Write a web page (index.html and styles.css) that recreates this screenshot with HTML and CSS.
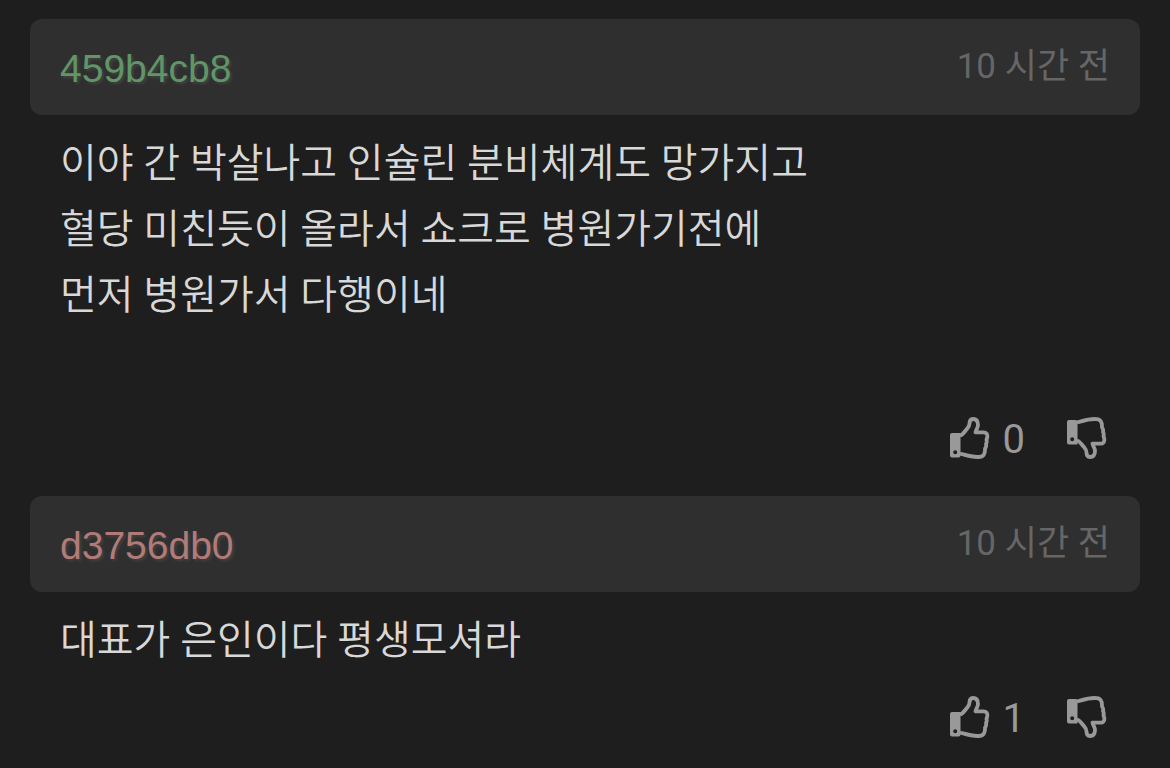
FILE: index.html
```html
<!DOCTYPE html>
<html lang="ko">
<head>
    <meta charset="UTF-8">
    <meta name="viewport" content="width=device-width, initial-scale=1.0">
    <title>댓글</title>
    <link rel="stylesheet" href="styles.css">
</head>
<body>
    <!-- Shared icon shapes -->
    <svg class="icon-defs" aria-hidden="true">
        <symbol id="hand" viewBox="0 0 40 42">
            <path fill="none" stroke="currentColor" stroke-width="3.8" stroke-linejoin="round" d="M10 18.500C12.500 18 14 15.500 16 13C18 10.500 19.500 9.500 19.500 6.500C19.500 3.500 20.500 2 23 2C26.500 2 28 4.500 28 8C28 11 26 12.500 25.500 15.300H33.500C36.500 15.300 37.600 17.500 37.300 20C37.100 21.500 36.500 22 36.500 23C37 24.500 36.600 26 36 27C36.500 29 36 30.500 35 31.500C35.300 37 33.500 40 28.500 40C21.500 40.300 17 38.500 10 36.500"/>
        </symbol>
        <symbol id="thumb-up" viewBox="0 0 40 42">
            <use href="#hand"/>
            <path fill="currentColor" fill-rule="evenodd" d="M2 16H10.500V38.500Q10.500 40.500 8.500 40.500H2Q0 40.500 0 38.500V18Q0 16 2 16ZM5.200 33.300A2 2 0 1 0 5.200 37.300A2 2 0 1 0 5.200 33.300Z"/>
        </symbol>
        <symbol id="thumb-down" viewBox="0 0 40 42">
            <use href="#hand" transform="matrix(1 0 0 -1 0 42)"/>
            <path fill="currentColor" fill-rule="evenodd" d="M2 3H8.500Q10.500 3 10.500 5V27.500H2Q0 27.500 0 25.500V5Q0 3 2 3ZM5.200 20.300A2 2 0 1 0 5.200 24.300A2 2 0 1 0 5.200 20.300Z"/>
        </symbol>
    </svg>

    <main class="comments">
        <article class="comment">
            <header class="comment-header">
                <span class="author green">459b4cb8</span>
                <time class="time">10 시간 전</time>
            </header>
            <p class="comment-body">
                이야 간 박살나고 인슐린 분비체계도 망가지고<br>
                혈당 미친듯이 올라서 쇼크로 병원가기전에<br>
                먼저 병원가서 다행이네<br>
                <br>
            </p>
            <div class="actions">
                <button type="button" class="vote" aria-label="추천">
                    <svg class="icon" width="40" height="42"><use href="#thumb-up"/></svg>
                    <span class="count">0</span>
                </button>
                <button type="button" class="vote" aria-label="비추천">
                    <svg class="icon" width="40" height="42"><use href="#thumb-down"/></svg>
                </button>
            </div>
        </article>

        <article class="comment">
            <header class="comment-header">
                <span class="author red">d3756db0</span>
                <time class="time">10 시간 전</time>
            </header>
            <p class="comment-body">대표가 은인이다 평생모셔라</p>
            <div class="actions">
                <button type="button" class="vote" aria-label="추천">
                    <svg class="icon" width="40" height="42"><use href="#thumb-up"/></svg>
                    <span class="count">1</span>
                </button>
                <button type="button" class="vote" aria-label="비추천">
                    <svg class="icon" width="40" height="42"><use href="#thumb-down"/></svg>
                </button>
            </div>
        </article>
    </main>
</body>
</html>
```
FILE: styles.css
```css
* {
    margin: 0;
    padding: 0;
    box-sizing: border-box;
}

body {
    background: #1e1e1e;
    color: #d8d8d8;
    font-family: Roboto, "Noto Sans CJK KR", sans-serif;
    font-size: 40px;
    line-height: 66px;
}

.icon-defs {
    display: none;
}

.comments {
    display: flex;
    flex-direction: column;
    gap: 37px;
    padding: 19px 30px 0;
}

.comment-header {
    display: flex;
    align-items: center;
    justify-content: space-between;
    height: 96px;
    padding: 0 30px;
    background: #2f2f2f;
    border-radius: 12px;
}

.author {
    padding-top: 4px;
    font-family: "Liberation Sans", Arial, sans-serif;
    font-size: 39px;
    text-shadow: 2px 2px 3px rgba(255, 255, 255, 0.1);
}

.green {
    color: #609666;
}

.red {
    color: #b27b77;
}

.time {
    color: #666;
    font-size: 35px;
}

.comment-body {
    padding: 16px 30px 0;
    font-weight: 350;
}

.actions {
    display: flex;
    justify-content: flex-end;
    gap: 42px;
    padding: 22px 33px 0;
}

.vote {
    display: flex;
    align-items: center;
    gap: 13px;
    height: 42px;
    background: none;
    border: none;
    color: #999;
    font: inherit;
    line-height: 42px;
    cursor: pointer;
}

.vote:hover {
    color: #ccc;
}

.count {
    padding-top: 4px;
    font-size: 40px;
}
```
